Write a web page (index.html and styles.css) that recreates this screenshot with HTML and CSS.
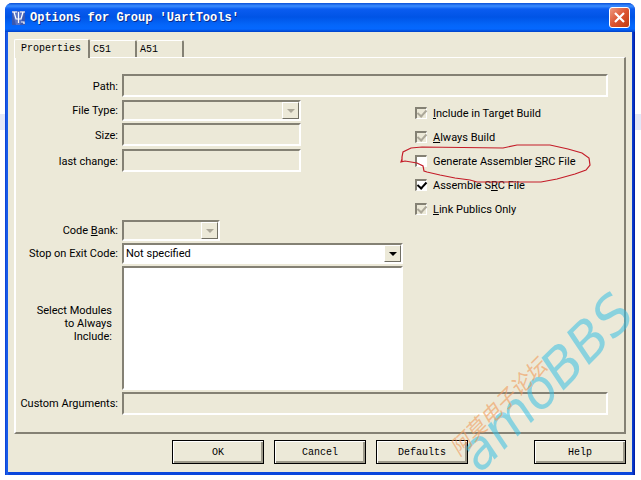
FILE: index.html
```html
<!DOCTYPE html>
<html lang="en">
<head>
<meta charset="utf-8">
<title>Options for Group 'UartTools'</title>
<link rel="stylesheet" href="styles.css">
</head>
<body>
<main class="window">
  <header class="titlebar">
    <svg class="app-icon" viewBox="0 0 13 14" aria-hidden="true">
      <rect width="13" height="14" fill="#3a58b0"/>
      <path d="M0 0H13L8 14H4Z" fill="#5a74c4"/>
      <path d="M0 1H5M8 1H13M2 1L4 8H9L11 1M6.500 1V12M9 11H12V13" fill="none" stroke="#fff" stroke-width="1.200"/>
    </svg>
    <h1 class="title">Options for Group 'UartTools'</h1>
    <button class="close" type="button" aria-label="Close">
      <svg viewBox="0 0 19 19" aria-hidden="true"><path d="M5 5L14 14M14 5L5 14" stroke="#fff" stroke-width="2.200"/></svg>
    </button>
  </header>
  <form class="client">
    <div class="tabs" role="tablist">
      <button class="tab active" type="button" role="tab" aria-selected="true">Properties</button>
      <button class="tab" type="button" role="tab" aria-selected="false">C51</button>
      <button class="tab" type="button" role="tab" aria-selected="false">A51</button>
    </div>
    <section class="panel" role="tabpanel">
      <label class="label" for="path">Path:</label>
      <input class="field wide" id="path" type="text" disabled>

      <label class="label" for="type">File Type:</label>
      <div class="combo medium">
        <select class="field" id="type" disabled><option></option></select>
        <span class="arrow"></span>
      </div>

      <label class="label" for="size">Size:</label>
      <input class="field medium" id="size" type="text" disabled>

      <label class="label" for="change">last change:</label>
      <input class="field medium" id="change" type="text" disabled>

      <label class="label row-bank" for="bank">Code <u>B</u>ank:</label>
      <div class="combo small row-bank">
        <select class="field" id="bank" disabled><option></option></select>
        <span class="arrow"></span>
      </div>

      <label class="label row-stop" for="stop">Stop on Exit Code:</label>
      <div class="combo row-stop">
        <select class="field white" id="stop"><option>Not specified</option></select>
        <span class="arrow on"></span>
      </div>

      <label class="label modules row-modules" for="modules">Select Modules<br>to Always<br>Include:</label>
      <select class="field white list row-modules" id="modules" multiple></select>

      <label class="label row-args" for="args">Custom Arguments:</label>
      <input class="field wide row-args" id="args" type="text" disabled>

      <div class="checks">
        <label class="check"><input type="checkbox" checked disabled><span><u>I</u>nclude in Target Build</span></label>
        <label class="check"><input type="checkbox" checked disabled><span><u>A</u>lways Build</span></label>
        <label class="check"><input type="checkbox"><span>Generate Assembler <u>S</u>RC File</span></label>
        <label class="check"><input type="checkbox" checked><span>Assemble S<u>R</u>C File</span></label>
        <label class="check"><input type="checkbox" checked disabled><span><u>L</u>ink Publics Only</span></label>
        <svg class="circle" viewBox="0 0 192 42" aria-hidden="true">
          <path d="M2 19V14L3 9L11 5L22 4L103 5L117 2L150 2L168 6L182 10L189 15L190 22L186 27L175 31L157 36L141 39H77L70 37L55 35L40 32L27 29L24 28L23 23L17 20L5 18L1 19L2 16" fill="none" stroke="#c41c28" stroke-width="1.200"/>
        </svg>
      </div>
    </section>
    <footer class="actions">
      <button class="btn" type="button">OK</button>
      <button class="btn" type="button">Cancel</button>
      <button class="btn" type="button">Defaults</button>
      <button class="btn help" type="button">Help</button>
    </footer>
  </form>
  <svg class="watermark" viewBox="0 0 190 210" aria-hidden="true">
    <g transform="translate(29 202) rotate(-45)">
      <text class="brand" x="0" y="0">amoBBS</text>
    </g>
    <g transform="translate(8 185) rotate(-45)">
      <text class="forum" x="0" y="0">阿莫电子论坛</text>
    </g>
  </svg>
</main>
</body>
</html>
```
FILE: styles.css
```css
* {
  box-sizing: border-box;
}

body {
  margin: 0;
  padding: 3px 6px 7px 5px;
  background: linear-gradient(#fff 114px, #e4e8f8 114px, #e4e8f8 130px, #fff 130px) no-repeat;
  font-family: Roboto, "Liberation Sans", sans-serif;
  font-size: 11px;
  color: #000;
}

.window {
  position: relative;
  padding: 0 3px 3px;
  border-radius: 7px 7px 0 0;
  background: linear-gradient(90deg, #0a3ccf, #1c62ee 2px, #0a46dc 4px, #0a46dc calc(100% - 3px), #0018a0);
}

.titlebar {
  display: flex;
  align-items: center;
  gap: 5px;
  height: 29px;
  margin: 0 -3px;
  padding: 0 5px 0 7px;
  border-radius: 7px 7px 0 0;
  background: linear-gradient(#0a50d8, #3a8cff 3px, #0a5cf0 6px, #0054e6 14px, #0466fa 22px, #0468ff 26px, #0040c8);
}

.app-icon {
  width: 13px;
  height: 14px;
}

.title {
  flex: 1;
  margin: 0;
  font: bold 12px "Liberation Mono", monospace;
  color: #fff;
  text-shadow: 1px 1px 0 #0a2c88;
}

.close {
  width: 21px;
  height: 21px;
  padding: 0;
  border: 1px solid #fff;
  border-radius: 3px;
  background: linear-gradient(135deg, #ee9a80, #dc5430 50%, #c03c10);
}

.close svg {
  display: block;
}

.client {
  padding: 7px 6px 8px;
  background: #ece9d8;
}

.tabs {
  display: flex;
  align-items: flex-end;
}

.tab {
  width: 47px;
  height: 17px;
  padding: 0 0 0 3px;
  border: 0 solid;
  border-width: 1px 2px 0 0;
  border-color: #fff #848174 #fff #fff;
  border-radius: 2px 2px 0 0;
  background: #ece9d8;
  font: 10px "Liberation Mono", monospace;
  text-align: left;
}

.tab.active {
  position: relative;
  width: 76px;
  height: 19px;
  margin-bottom: -1px;
  padding: 0 0 1px 6px;
  border-left-width: 1px;
}

.panel {
  display: grid;
  grid-template-columns: 102px 281px 1fr;
  grid-template-rows: 24px 21px 24px 24px 43px 21px 21px 124px 23px;
  column-gap: 4px;
  row-gap: 2px;
  padding: 16px 16px 17px 0;
  border: 2px solid;
  border-width: 1px 2px 2px;
  border-color: #fff #848174 #848174 #fff;
}

.label {
  grid-column: 1;
  align-self: center;
  text-align: right;
  line-height: 13px;
}

.modules {
  padding-right: 6px;
  padding-bottom: 10px;
}

.row-bank {
  grid-row: 6;
}

.row-stop {
  grid-row: 7;
}

.row-modules {
  grid-row: 8;
}

.row-args {
  grid-row: 9;
}

.field {
  appearance: none;
  display: block;
  width: 100%;
  height: 23px;
  margin: 0;
  padding: 0 2px;
  border: 2px solid;
  border-color: #848174 #fff #fff #848174;
  border-radius: 0;
  outline: 0;
  background: #ece9d8;
  color: #000;
  font: inherit;
  opacity: 1;
}

.panel > .field,
.combo {
  grid-column: 2;
}

.panel > .wide {
  grid-column: 2 / 4;
}

.panel > .medium {
  width: 179px;
}

.combo {
  position: relative;
}

.small {
  width: 98px;
}

.combo .field {
  height: 21px;
}

.field.white {
  background: #fff;
}

.field.list {
  height: 124px;
}

.arrow {
  position: absolute;
  top: 2px;
  right: 2px;
  width: 17px;
  height: 17px;
  border: 1px solid;
  border-color: #fff #716f64 #716f64 #fff;
  background: #ece9d8;
  pointer-events: none;
}

.arrow::after {
  content: "";
  position: absolute;
  top: 6px;
  left: 4px;
  border: 4px solid transparent;
  border-top-color: #aca899;
  border-bottom: 0;
}

.arrow.on::after {
  border-top-color: #000;
}

.checks {
  position: relative;
  grid-column: 3;
  grid-row: 2 / 7;
  align-self: start;
  padding: 1px 0 0 8px;
}

.check {
  display: flex;
  align-items: center;
  gap: 6px;
  height: 24px;
}

.check input {
  appearance: none;
  width: 12px;
  height: 12px;
  margin: 0;
  border: 2px solid;
  border-width: 2px 1px 1px 2px;
  border-color: #848174 #fff #fff #848174;
  background: #fff;
}

.check input:disabled {
  background: #ece9d8;
}

.check input:checked::after {
  content: "";
  display: block;
  width: 4px;
  height: 7px;
  margin: -1px 0 0 2px;
  border: solid #000;
  border-width: 0 2px 2px 0;
  transform: rotate(42deg);
}

.check input:disabled::after {
  border-color: #aca899;
}

.circle {
  position: absolute;
  top: 43px;
  left: -7px;
  width: 192px;
  height: 42px;
  pointer-events: none;
}

.actions {
  display: flex;
  gap: 10px;
  padding: 6px 0 0 158px;
}

.btn {
  width: 92px;
  height: 24px;
  padding: 0;
  border: 1px solid #000;
  border-radius: 0;
  background: #ece9d8;
  box-shadow: inset 1px 1px #fff, inset -2px -2px #9c998a;
  font: 10px "Liberation Mono", monospace;
  color: #000;
}

.help {
  margin-left: auto;
}

.watermark {
  position: absolute;
  right: -6px;
  bottom: -7px;
  width: 190px;
  height: 210px;
  overflow: visible;
  pointer-events: none;
}

.brand {
  font: italic 53px "DejaVu Sans", sans-serif;
  fill: #38bfe4;
  fill-opacity: 0.55;
}

.forum {
  font: italic 21px "Noto Sans CJK SC", sans-serif;
  fill: #f09a58;
  fill-opacity: 0.6;
}
```
